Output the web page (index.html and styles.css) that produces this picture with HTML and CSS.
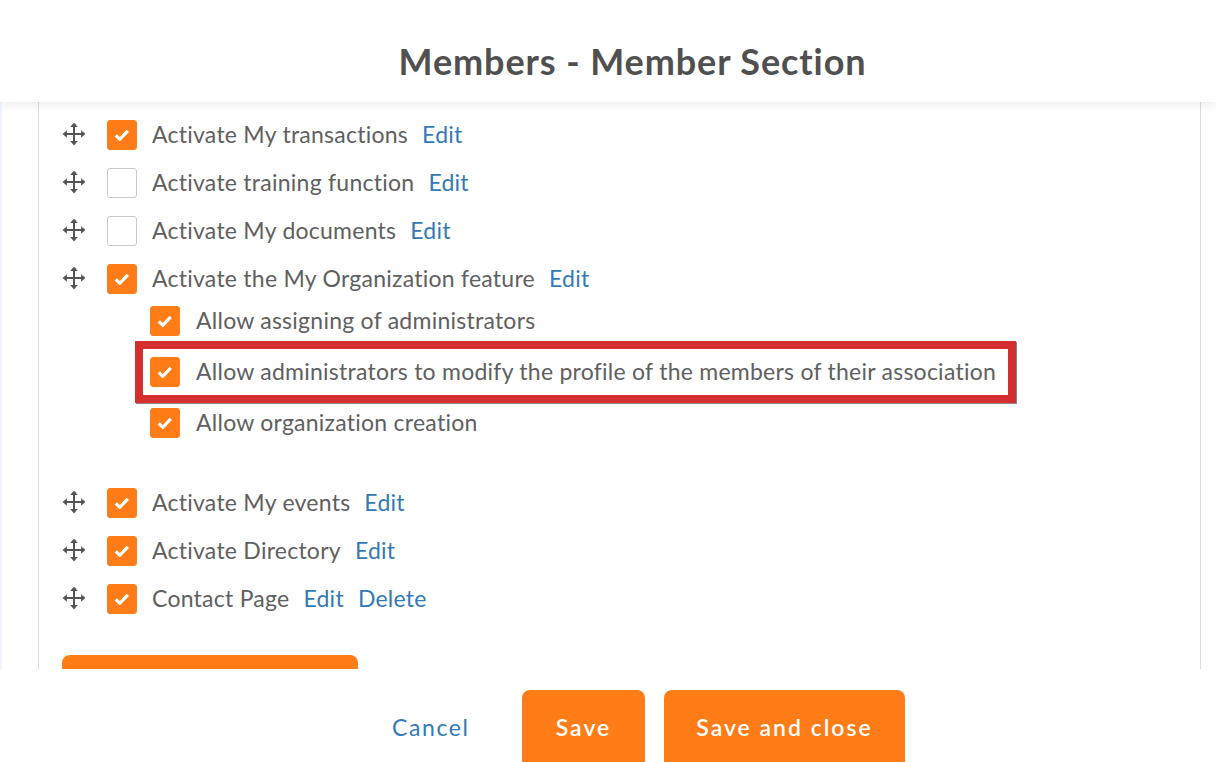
FILE: index.html
```html
<!DOCTYPE html>
<html lang="en">
<head>
<meta charset="utf-8">
<title>Members - Member Section</title>
<link rel="stylesheet" href="styles.css">
</head>
<body>
<svg class="defs" width="0" height="0" aria-hidden="true">
  <symbol id="move" viewBox="0 0 24 24">
    <path d="M12 2v20M2 12h20" fill="none" stroke="currentColor" stroke-width="2"/>
    <path d="M12 0.5l3.8 4.4H8.2zM12 23.5l3.8-4.4H8.2zM0.5 12l4.4-3.8v7.6zM23.5 12l-4.4-3.8v7.6z" fill="currentColor"/>
  </symbol>
  <symbol id="check" viewBox="0 0 16 16">
    <path d="M1.8 8.4l4 3.9 8-8.4" fill="none" stroke="currentColor" stroke-width="3.2"/>
  </symbol>
</svg>
<div class="app">
  <header class="header"><h1 class="title">Members - Member Section</h1></header>
  <main class="main">
    <div class="panel">
      <div class="row"><svg class="move"><use href="#move"/></svg><span class="box on"><svg><use href="#check"/></svg></span><span class="label">Activate My transactions</span><a class="link">Edit</a></div>
      <div class="row"><svg class="move"><use href="#move"/></svg><span class="box"></span><span class="label">Activate training function</span><a class="link">Edit</a></div>
      <div class="row"><svg class="move"><use href="#move"/></svg><span class="box"></span><span class="label">Activate My documents</span><a class="link">Edit</a></div>
      <div class="row"><svg class="move"><use href="#move"/></svg><span class="box on"><svg><use href="#check"/></svg></span><span class="label">Activate the My Organization feature</span><a class="link">Edit</a></div>
      <div class="subs">
        <div class="sub"><span class="box on"><svg><use href="#check"/></svg></span><span class="label">Allow assigning of administrators</span></div>
        <div class="sub marked"><span class="box on"><svg><use href="#check"/></svg></span><span class="label">Allow administrators to modify the profile of the members of their association</span></div>
        <div class="sub"><span class="box on"><svg><use href="#check"/></svg></span><span class="label">Allow organization creation</span></div>
      </div>
      <div class="row"><svg class="move"><use href="#move"/></svg><span class="box on"><svg><use href="#check"/></svg></span><span class="label">Activate My events</span><a class="link">Edit</a></div>
      <div class="row"><svg class="move"><use href="#move"/></svg><span class="box on"><svg><use href="#check"/></svg></span><span class="label">Activate Directory</span><a class="link">Edit</a></div>
      <div class="row"><svg class="move"><use href="#move"/></svg><span class="box on"><svg><use href="#check"/></svg></span><span class="label">Contact Page</span><a class="link">Edit</a><a class="link">Delete</a></div>
      <div class="add"></div>
    </div>
  </main>
  <footer class="footer">
    <a class="cancel">Cancel</a>
    <button class="btn save">Save</button>
    <button class="btn close">Save and close</button>
  </footer>
</div>
</body>
</html>
```
FILE: styles.css
```css
* { box-sizing: border-box; }
html, body { margin: 0; height: 100%; overflow: hidden; background: #fff; }
body { font-family: "Lato", "Liberation Sans", sans-serif; color: #606060; }
.defs { position: absolute; }
.app { height: 762px; display: flex; flex-direction: column; overflow: hidden; }
.header { height: 102px; flex: none; display: flex; align-items: center; justify-content: center; padding: 20px 0 0 48px; background: #fff; box-shadow: 0 2px 10px rgba(0,0,0,.09); position: relative; z-index: 1; }
.title { margin: 0; font-size: 36px; font-weight: 700; color: #505050; letter-spacing: .9px; line-height: 44px; }
.main { flex: 1; min-height: 0; overflow: hidden; padding: 0 16px 0 38px; background: linear-gradient(to right, #eef5fd 2px, #fff 2px); }
.panel { height: 100%; overflow: hidden; border-left: 1px solid #ddd; border-right: 1px solid #ddd; padding: 9px 0 0 23px; }
.row { height: 48px; display: flex; align-items: center; font-size: 23px; }
.move { width: 24px; height: 24px; margin-right: 21px; color: #555; margin-top: -2px; }
.box { width: 30px; height: 30px; flex: none; border-radius: 3px; border: 1px solid #c8c8c8; background: #fff; display: flex; align-items: center; justify-content: center; margin-right: 15px; }
.box.on { background: #ff7c17; border-color: #ff7c17; color: #fff; }
.box svg { width: 16px; height: 16px; }
.label { letter-spacing: .25px; line-height: 30px; white-space: nowrap; margin-bottom: 2px; }
.link { color: #337ab7; margin-left: 14px; letter-spacing: .25px; line-height: 30px; margin-bottom: 2px; }
.subs { margin: 3px 0 41px 88px; display: flex; flex-direction: column; gap: 21px; }
.sub { display: flex; align-items: center; font-size: 23px; height: 30px; width: max-content; position: relative; }
.sub .box { margin-right: 16px; }
.marked::after { content: ""; position: absolute; top: -16px; bottom: -16px; left: -15px; right: -20px; border: 8px solid #d32f2f; box-shadow: 1px 1px 0 #888; pointer-events: none; }
.add { width: 296px; height: 60px; margin-top: 32px; background: #ff7c17; border-radius: 8px; }
.footer { height: 93px; flex: none; display: flex; align-items: flex-start; padding: 21px 0 0 392px; background: #fff; position: relative; overflow: hidden; }
.cancel { color: #337ab7; font-size: 23px; letter-spacing: 1.6px; margin-top: 20px; width: 130px; line-height: 34px; }
.btn { height: 80px; border: 0; border-radius: 8px; background: #ff7c17; color: #fff; font: 600 23px "Lato", "Liberation Sans", sans-serif; letter-spacing: 2px; padding: 0 0 6px; }
.save { width: 123px; margin-right: 19px; }
.close { width: 241px; }
```
